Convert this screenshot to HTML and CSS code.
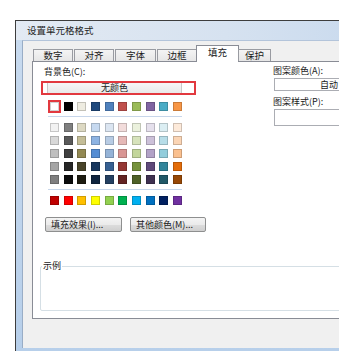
FILE: index.html
```html
<!DOCTYPE html>
<html>
<head>
<meta charset="utf-8">
<link rel="stylesheet" href="styles.css">
</head>
<body>
<div class="page">
  <div class="window">
    <div class="titlebar">设置单元格格式</div>
    <div class="client">
      <div class="tabs">
        <div class="tab t1">数字</div>
        <div class="tab t2">对齐</div>
        <div class="tab t3">字体</div>
        <div class="tab t4">边框</div>
        <div class="tab t5 active">填充</div>
        <div class="tab t6">保护</div>
      </div>
      <div class="panel">
        <div class="top">
          <div class="left">
            <div class="label lbl-bg">背景色(C):</div>
            <div class="mark">
              <div class="nocolor">无颜色</div>
            </div>
            <div class="grid row-theme">
              <div class="sw sel" style="background:#FFFFFF"></div>
              <div class="sw" style="background:#000000"></div>
              <div class="sw" style="background:#EEECE1"></div>
              <div class="sw" style="background:#1F497D"></div>
              <div class="sw" style="background:#4F81BD"></div>
              <div class="sw" style="background:#C0504D"></div>
              <div class="sw" style="background:#9BBB59"></div>
              <div class="sw" style="background:#8064A2"></div>
              <div class="sw" style="background:#4BACC6"></div>
              <div class="sw" style="background:#F79646"></div>
            </div>
            <div class="sep"></div>
            <div class="grid">
              <div class="sw" style="background:#F2F2F2"></div>
              <div class="sw" style="background:#7F7F7F"></div>
              <div class="sw" style="background:#DDD9C3"></div>
              <div class="sw" style="background:#C6D9F0"></div>
              <div class="sw" style="background:#DBE5F1"></div>
              <div class="sw" style="background:#F2DCDB"></div>
              <div class="sw" style="background:#EBF1DD"></div>
              <div class="sw" style="background:#E5E0EC"></div>
              <div class="sw" style="background:#DBEEF3"></div>
              <div class="sw" style="background:#FDEADA"></div>

              <div class="sw" style="background:#D8D8D8"></div>
              <div class="sw" style="background:#595959"></div>
              <div class="sw" style="background:#C4BD97"></div>
              <div class="sw" style="background:#8DB3E2"></div>
              <div class="sw" style="background:#B8CCE4"></div>
              <div class="sw" style="background:#E5B9B7"></div>
              <div class="sw" style="background:#D7E3BC"></div>
              <div class="sw" style="background:#CCC1D9"></div>
              <div class="sw" style="background:#B7DDE8"></div>
              <div class="sw" style="background:#FBD5B5"></div>

              <div class="sw" style="background:#BFBFBF"></div>
              <div class="sw" style="background:#3F3F3F"></div>
              <div class="sw" style="background:#938953"></div>
              <div class="sw" style="background:#548DD4"></div>
              <div class="sw" style="background:#95B3D7"></div>
              <div class="sw" style="background:#D99694"></div>
              <div class="sw" style="background:#C3D69B"></div>
              <div class="sw" style="background:#B2A2C7"></div>
              <div class="sw" style="background:#92CDDC"></div>
              <div class="sw" style="background:#FAC08F"></div>

              <div class="sw" style="background:#A5A5A5"></div>
              <div class="sw" style="background:#262626"></div>
              <div class="sw" style="background:#494429"></div>
              <div class="sw" style="background:#17365D"></div>
              <div class="sw" style="background:#366092"></div>
              <div class="sw" style="background:#953734"></div>
              <div class="sw" style="background:#76923C"></div>
              <div class="sw" style="background:#5F497A"></div>
              <div class="sw" style="background:#31859B"></div>
              <div class="sw" style="background:#E36C09"></div>

              <div class="sw" style="background:#7F7F7F"></div>
              <div class="sw" style="background:#0C0C0C"></div>
              <div class="sw" style="background:#1D1B10"></div>
              <div class="sw" style="background:#0F243E"></div>
              <div class="sw" style="background:#244061"></div>
              <div class="sw" style="background:#632423"></div>
              <div class="sw" style="background:#4F6128"></div>
              <div class="sw" style="background:#3F3151"></div>
              <div class="sw" style="background:#205867"></div>
              <div class="sw" style="background:#974806"></div>
            </div>
            <div class="sep"></div>
            <div class="grid">
              <div class="sw" style="background:#C00000"></div>
              <div class="sw" style="background:#FF0000"></div>
              <div class="sw" style="background:#FFC000"></div>
              <div class="sw" style="background:#FFFF00"></div>
              <div class="sw" style="background:#92D050"></div>
              <div class="sw" style="background:#00B050"></div>
              <div class="sw" style="background:#00B0F0"></div>
              <div class="sw" style="background:#0070C0"></div>
              <div class="sw" style="background:#002060"></div>
              <div class="sw" style="background:#7030A0"></div>
            </div>
            <div class="buttons">
              <div class="btn b1">填充效果(I)...</div>
              <div class="btn b2">其他颜色(M)...</div>
            </div>
          </div>
          <div class="right">
            <div class="label">图案颜色(A):</div>
            <div class="combo">自动</div>
            <div class="label lbl-style">图案样式(P):</div>
            <div class="combo tall"></div>
          </div>
        </div>
        <div class="group">
          <span class="legend">示例</span>
        </div>
      </div>
    </div>
  </div>
</div>
</body>
</html>
```
FILE: styles.css
```css
* { box-sizing: border-box; }
html, body { margin: 0; padding: 0; background: #ffffff; }
body {
  font-family: "Noto Sans CJK SC", "Noto Sans", sans-serif;
  font-size: 9px;
  color: #1a1a1a;
}
.page {
  width: 339px;
  height: 351px;
  overflow: hidden;
  padding: 20px 0 0 15px;
  background: #ffffff;
}
.window {
  width: 420px;
  height: 331px;
  border-left: 1px solid #3d3d3d;
  border-top: 1px solid #3d3d3d;
  background: linear-gradient(180deg, #c9dbef 0%, #b7cfea 100%);
  padding: 0 0 3px 6px;
  display: flex;
  flex-direction: column;
}
.titlebar {
  height: 19px;
  line-height: 19px;
  padding-left: 5px;
  font-size: 9.5px;
  color: #1e1e1e;
  margin-left: -6px;
  padding-left: 11px;
  background: linear-gradient(90deg, #e3eaf3 0%, #d6e2f0 50%, #c3d6ed 100%);
}
.client {
  flex: 1;
  background: #f0f0f0;
  border-left: 1px solid #99adc6;
  border-top: 1px solid #b3c4da;
  padding: 4px 0 0 9px;
  display: flex;
  flex-direction: column;
}
.tabs {
  display: flex;
  align-items: flex-end;
  height: 16px;
  padding-left: 1px;
  position: relative;
  z-index: 2;
}
.tab {
  height: 12px;
  line-height: 11px;
  text-align: center;
  border: 1px solid #999ba1;
  border-bottom: none;
  background: linear-gradient(180deg, #f4f4f4 0%, #e6e6e6 100%);
  font-size: 9.5px;
  margin-right: 1px;
}
.t1 { width: 40px; }
.t2 { width: 40px; }
.t3 { width: 41px; }
.t4 { width: 40px; margin-right: -1px; }
.t5 { width: 43px; margin-right: -1px; }
.t6 { width: 33px; }
.tab.active {
  height: 17px;
  line-height: 13px;
  background: #ffffff;
  margin-bottom: -1px;
  border-color: #898c95;
}
.panel {
  height: 258px;
  background: #ffffff;
  border: 1px solid #898c95;
  display: flex;
  flex-direction: column;
}
.top {
  display: flex;
}
.left {
  width: 240px;
  padding: 4px 0 0 8px;
}
.label {
  height: 12px;
  line-height: 12px;
  white-space: nowrap;
}
.lbl-bg { margin-left: 3px; }
.mark {
  margin-top: 3px;
  width: 155px;
  height: 14px;
  border: 2px solid #e2393f;
  padding: 0;
}
.nocolor {
  height: 10px;
  line-height: 10px;
  text-align: center;
  background: linear-gradient(180deg, #f6f6f6 0%, #e9e9e9 100%);
  border-left: 1px solid #c9c9c9;
  border-right: 1px solid #c9c9c9;
  margin: 0 12px 0 4px;
}
.grid {
  display: grid;
  grid-template-columns: repeat(10, 9px);
  column-gap: 4.67px;
  row-gap: 4px;
  margin-left: 9px;
}
.row-theme { margin-top: 7px; }
.sw {
  width: 9px;
  height: 9px;
  box-shadow: inset 0 0 0 1px rgba(0, 0, 0, 0.18);
}
.sw.sel {
  outline: 2px solid #e2393f;
}
.sep {
  width: 134px;
  height: 1px;
  background: #c7d6ea;
  margin: 5px 0 6px 7px;
}
.grid + .sep + .grid { }
.buttons {
  display: flex;
  gap: 8px;
  margin: 12px 0 0 4px;
}
.btn {
  height: 15px;
  line-height: 13px;
  border: 1px solid #8e8f8f;
  border-radius: 2px;
  background: linear-gradient(180deg, #f4f4f4 0%, #ebebeb 50%, #dddddd 51%, #cfcfcf 100%);
  padding-left: 5px;
  white-space: nowrap;
}
.b1 { width: 77px; }
.b2 { width: 76px; }
.right {
  padding-top: 3px;
}
.combo {
  margin-top: 1px;
  margin-left: 1px;
  width: 110px;
  height: 13px;
  line-height: 11px;
  border: 1px solid #abadb3;
  background: #ffffff;
  padding-left: 45px;
}
.lbl-style { margin-top: 5px; }
.combo.tall { height: 17px; margin-top: 1px; }
.group {
  position: relative;
  margin: 34px 0 0 7px;
  width: 340px;
  height: 45px;
  border: 1px solid #d5dfe5;
  border-radius: 2px;
}
.legend {
  position: absolute;
  left: 1px;
  top: -7px;
  line-height: 12px;
  padding: 0 1px;
  background: #ffffff;
}
```
